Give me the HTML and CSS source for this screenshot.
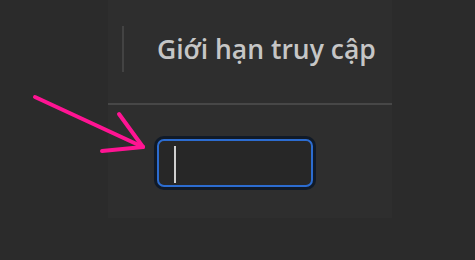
FILE: index.html
```html
<!DOCTYPE html>
<html lang="vi">
<head>
<meta charset="utf-8">
<link rel="stylesheet" href="styles.css">
</head>
<body>
<div class="panel">
  <div class="header">
    <span class="bar"></span>
    <h1 class="title">Giới hạn truy cập</h1>
  </div>
  <div class="divider"></div>
  <div class="content">
    <div class="field"><span class="caret"></span></div>
  </div>
</div>
<svg class="arrow" width="160" height="170" viewBox="0 0 160 170">
  <g stroke="#ff1493" stroke-width="4" stroke-linecap="round" fill="none">
    <line x1="35" y1="97" x2="143" y2="147"/>
    <line x1="119" y1="114" x2="143" y2="147"/>
    <line x1="102" y1="151" x2="143" y2="147"/>
  </g>
</svg>
</body>
</html>
```

FILE: styles.css
```css
html, body {
  margin: 0;
  padding: 0;
  background: #2b2b2b;
  width: 475px;
  height: 260px;
  overflow: hidden;
}
.panel {
  margin-left: 108px;
  width: 284px;
  background: #2e2e2e;
}
.header {
  height: 103px;
  box-sizing: border-box;
  padding-top: 26px;
  padding-left: 14px;
  display: flex;
  align-items: flex-start;
  gap: 33px;
}
.bar {
  width: 2px;
  height: 46px;
  background: #434343;
}
.title {
  margin: 0;
  height: 46px;
  display: flex;
  align-items: center;
  font-family: "Open Sans", "Noto Sans", sans-serif;
  font-weight: 600;
  font-size: 26.5px;
  color: #c6c6c6;
  letter-spacing: 0;
  white-space: nowrap;
}
.divider {
  height: 2px;
  background: #474747;
}
.content {
  height: 113px;
  box-sizing: border-box;
  padding-top: 34px;
  padding-left: 49px;
}
.field {
  width: 156px;
  height: 48px;
  box-sizing: border-box;
  border: 2px solid #2c6cd0;
  border-radius: 7px;
  background: #272727;
  box-shadow: 0 0 0 3px #101a28;
  padding: 5px 0 0 15px;
}
.caret {
  display: block;
  width: 2px;
  height: 37px;
  background: #cfcfcf;
}
.arrow {
  position: absolute;
  left: 0;
  top: 0;
}
```
